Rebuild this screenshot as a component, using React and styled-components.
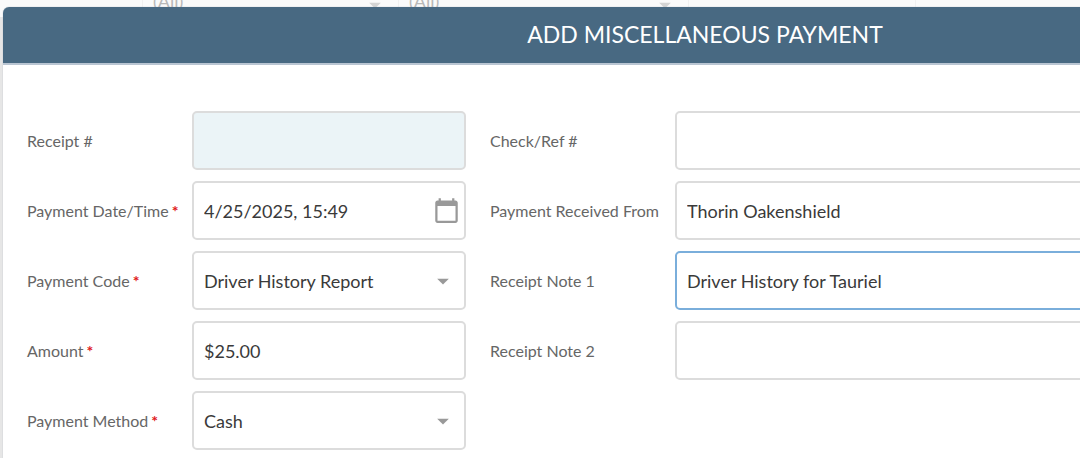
import React from 'react'
import styled, { createGlobalStyle } from "styled-components";
import { MdArrowDropDown, MdCalendarToday } from 'react-icons/md'


const GlobalStyle = createGlobalStyle`
    * {
      box-sizing: border-box;
    }
    body {
      margin: 0;
      font-family: Lato, "Liberation Sans", sans-serif;
      font-size: 18px;
    }
    input, select, button {
      font: inherit;
      color: inherit;
    }
`

const Page = styled.main`
    min-height: 100vh;
    overflow: hidden;
    background-color: #e6e6e6;
`

const FilterBar = styled.div`
    display: grid;
    grid-template-columns: 143px 256px 290px 227px 1fr;
    height: 32px;
    margin-top: -15px;
    margin-bottom: -10px;
    background-color: #fafafa;
    color: #b8b8b8;
`

const FilterCell = styled.div`
    position: relative;
    border-right: 1px solid #f0f0f0;
    svg {
      position: absolute;
      right: 9px;
      bottom: -2px;
      color: #d4d4d4;
      pointer-events: none;
    }
`

const FilterSelect = styled.select`
    width: 100%;
    height: 100%;
    padding: 0 10px;
    border: none;
    background: none;
    appearance: none;
`

const Dialog = styled.section`
    position: relative;
    width: 130vw;
    min-height: calc(100vh - 7px);
    margin-left: 3px;
    border-radius: 6px 0 0 0;
    background-color: white;
    box-shadow: 0 0 1px #8a9aa8;
`

const DialogTitle = styled.h1`
    margin: 0;
    padding: 11px 12px 13px;
    border-bottom: 2px solid #b9c5d2;
    border-radius: 6px 0 0 0;
    background-color: #486982;
    color: white;
    font-size: 23px;
    font-weight: 400;
    line-height: 32px;
    text-align: center;
`

const Form = styled.form`
    display: grid;
    grid-template-columns: 439px 1fr;
    column-gap: 24px;
    align-items: start;
    padding: 46px 24px 8px;
`

const FormColumn = styled.div`
    display: flex;
    flex-direction: column;
    gap: 11px;
`

const FormRow = styled.div`
    display: grid;
    grid-template-columns: ${props => props.$labelWidth} minmax(0, 1fr);
    align-items: center;
`

const Label = styled.label`
    color: #666;
    font-size: 16px;
    white-space: nowrap;
`

const Required = styled.span`
    margin-left: 3px;
    color: #e01818;
    font-weight: 700;
`

const Field = styled.div`
    position: relative;
    display: flex;
    align-items: center;
    height: 59px;
    border: 2px solid ${props => props.$active ? '#7aaedb' : '#dcdcdc'};
    border-radius: 5px;
    background-color: ${props => props.$readOnly ? '#ebf4f7' : 'white'};
    color: #3a3a3a;
`

const TextInput = styled.input`
    flex: 1;
    min-width: 0;
    height: 100%;
    padding: 0 10px;
    border: none;
    outline: none;
    background: none;
`

const SelectInput = styled.select`
    width: 100%;
    height: 100%;
    padding: 0 40px 0 10px;
    border: none;
    outline: none;
    background: none;
    appearance: none;
`

const SelectArrow = styled(MdArrowDropDown)`
    position: absolute;
    right: 7px;
    color: #999;
    pointer-events: none;
`

const CalendarButton = styled.button`
    display: flex;
    padding: 0;
    margin-right: 4px;
    border: none;
    background: none;
    color: #999;
    cursor: pointer;
`

const leftFields = [
  { id: 'receipt', label: 'Receipt #', value: '', readOnly: true },
  { id: 'date', label: 'Payment Date/Time', value: '4/25/2025, 15:49', required: true, type: 'date' },
  { id: 'code', label: 'Payment Code', value: 'Driver History Report', required: true, type: 'select' },
  { id: 'amount', label: 'Amount', value: '$25.00', required: true },
  { id: 'method', label: 'Payment Method', value: 'Cash', required: true, type: 'select' },
]

const rightFields = [
  { id: 'check', label: 'Check/Ref #', value: '' },
  { id: 'from', label: 'Payment Received From', value: 'Thorin Oakenshield' },
  { id: 'note1', label: 'Receipt Note 1', value: 'Driver History for Tauriel', active: true },
  { id: 'note2', label: 'Receipt Note 2', value: '' },
]

function PaymentField({ field, labelWidth }) {
  return (
    <FormRow $labelWidth={labelWidth}>
        <Label htmlFor={field.id}>
            {field.label}
            {field.required && <Required>*</Required>}
        </Label>
        <Field $active={field.active} $readOnly={field.readOnly}>
            {field.type === 'select' ? (
              <>
                <SelectInput id={field.id} defaultValue={field.value}>
                    <option>{field.value}</option>
                </SelectInput>
                <SelectArrow size={28} />
              </>
            ) : (
              <TextInput id={field.id} type='text' defaultValue={field.value} readOnly={field.readOnly} />
            )}
            {field.type === 'date' && (
              <CalendarButton type='button' aria-label='Choose date'>
                  <MdCalendarToday size={27} />
              </CalendarButton>
            )}
        </Field>
    </FormRow>
  )
}

function Filter({ name }) {
  return (
    <FilterCell>
        <FilterSelect aria-label={name}>
            <option>(All)</option>
        </FilterSelect>
        <MdArrowDropDown size={28} />
    </FilterCell>
  )
}

function App() {
  return (
    <Page>
      <GlobalStyle />
      <FilterBar>
          <FilterCell />
          <Filter name='Code' />
          <Filter name='Method' />
          <FilterCell />
      </FilterBar>
      <Dialog>
          <DialogTitle>ADD MISCELLANEOUS PAYMENT</DialogTitle>
          <Form>
              <FormColumn>
                  {leftFields.map(field => (
                    <PaymentField key={field.id} field={field} labelWidth='165px' />
                  ))}
              </FormColumn>
              <FormColumn>
                  {rightFields.map(field => (
                    <PaymentField key={field.id} field={field} labelWidth='185px' />
                  ))}
              </FormColumn>
          </Form>
      </Dialog>
    </Page>
  )
}

export default App
